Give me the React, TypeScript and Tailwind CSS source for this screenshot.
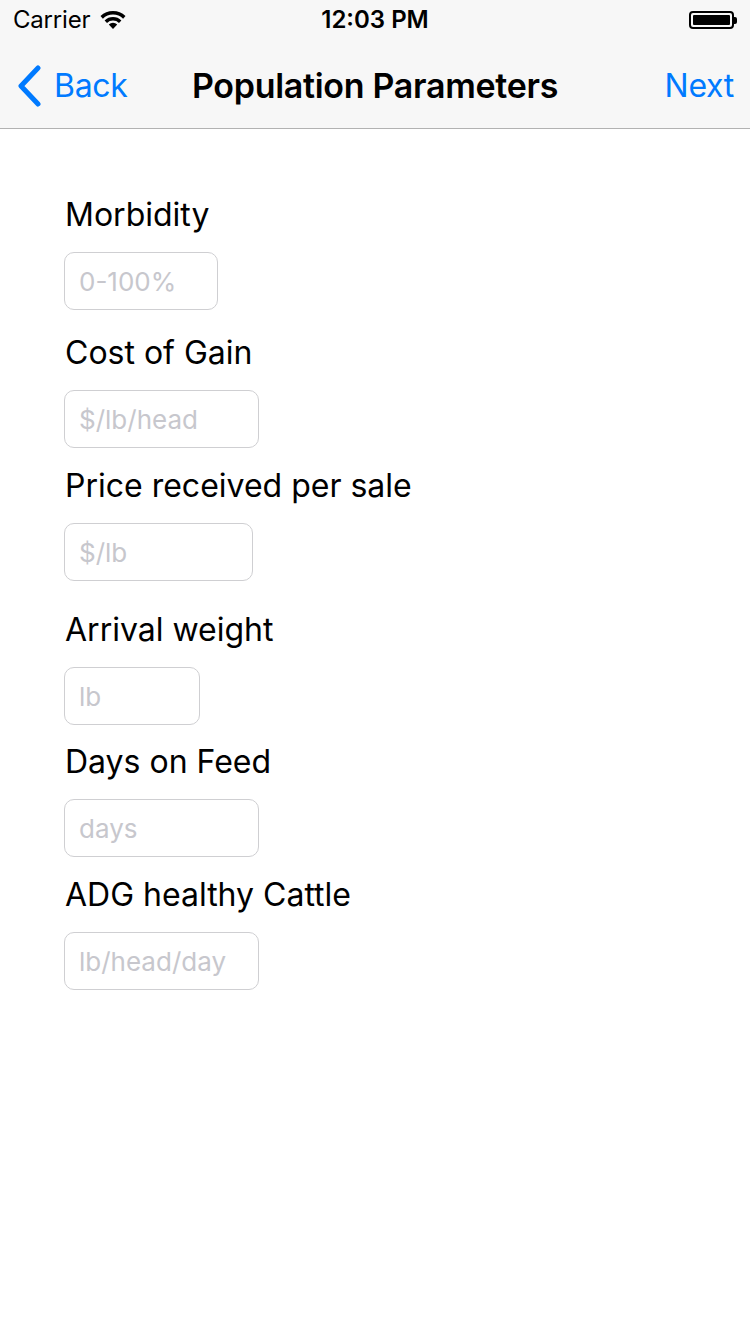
import type { ReactNode } from "react";

// Form screen: iOS-style status bar + nav bar, then a column of labelled
// numeric fields with rounded placeholder boxes.
type Field = {
  label: string;
  placeholder: string;
  width: string;
  top: string;
};

const FIELDS: Field[] = [
  { label: "Morbidity", placeholder: "0-100%", width: "w-[154px]", top: "mt-[66px]" },
  { label: "Cost of Gain", placeholder: "$/lb/head", width: "w-[195px]", top: "mt-[23px]" },
  { label: "Price received per sale", placeholder: "$/lb", width: "w-[189px]", top: "mt-[18px]" },
  { label: "Arrival weight", placeholder: "lb", width: "w-[136px]", top: "mt-[29px]" },
  { label: "Days on Feed", placeholder: "days", width: "w-[195px]", top: "mt-[17px]" },
  { label: "ADG healthy Cattle", placeholder: "lb/head/day", width: "w-[195px]", top: "mt-[18px]" },
];

export default function App() {
  return (
    <div className="min-h-[1334px] w-[750px] bg-white font-['Inter','Liberation_Sans',sans-serif] text-black">
      <header className="border-b border-[#b2b2b2] bg-[#f7f7f7]">
        <StatusBar />
        <div className="relative flex h-[88px] items-center justify-between pt-[3px] pr-[16px] pl-[16px]">
          <button type="button" className="flex items-center gap-[12px] text-[#007aff]">
            <svg width="26" height="42" viewBox="0 0 26 42" fill="none">
              <path d="M22 3L5 21l17 18" stroke="#007aff" strokeWidth="5" strokeLinecap="round" strokeLinejoin="round" />
            </svg>
            <span className="text-[32px] leading-none tracking-[-0.3px]">Back</span>
          </button>
          <h1 className="absolute left-1/2 -translate-x-1/2 text-[34px] leading-none font-semibold tracking-[-0.3px] whitespace-nowrap">
            Population Parameters
          </h1>
          <button type="button" className="text-[32px] leading-none tracking-[-0.3px] text-[#007aff]">
            Next
          </button>
        </div>
      </header>

      <main className="flex flex-col px-[64px]">
        {FIELDS.map((f) => (
          <FieldRow key={f.label} field={f} />
        ))}
      </main>
    </div>
  );
}

function FieldRow({ field }: { field: Field }) {
  return (
    <div className={`flex flex-col ${field.top}`}>
      <label className="pl-[1px] text-[32px] leading-[40px] tracking-[0px]">{field.label}</label>
      <div
        className={`mt-[17px] flex h-[58px] ${field.width} items-center rounded-[10px] border border-[#cfcfd2] px-[14px] text-[26px] text-[#c7c7cd]`}
      >
        {field.placeholder}
      </div>
    </div>
  );
}

function StatusBar(): ReactNode {
  return (
    <div className="relative flex h-[40px] items-center justify-between px-[13px] text-[24px] leading-none">
      <div className="flex items-center gap-[10px]">
        <span className="tracking-[-0.2px]">Carrier</span>
        <svg width="26" height="20" viewBox="0 0 26 20">
          <path d="M13 19l-4.2-4.6a6 6 0 0 1 8.4 0z" fill="#000" />
          <path d="M4.6 10.4a12 12 0 0 1 16.8 0l-2.4 2.6a8.5 8.5 0 0 0-12 0z" fill="#000" />
          <path d="M0.5 6.1a18 18 0 0 1 25 0l-2.4 2.6a14.5 14.5 0 0 0-20.2 0z" fill="#000" />
        </svg>
      </div>
      <span className="absolute left-1/2 -translate-x-1/2 font-semibold">12:03 PM</span>
      <div className="flex items-center">
        <div className="flex h-[18px] w-[45px] items-center rounded-[4px] border-2 border-black p-[2px]">
          <div className="h-full w-full rounded-[1px] bg-black" />
        </div>
        <div className="h-[7px] w-[3px] rounded-r-[2px] bg-black" />
      </div>
    </div>
  );
}
